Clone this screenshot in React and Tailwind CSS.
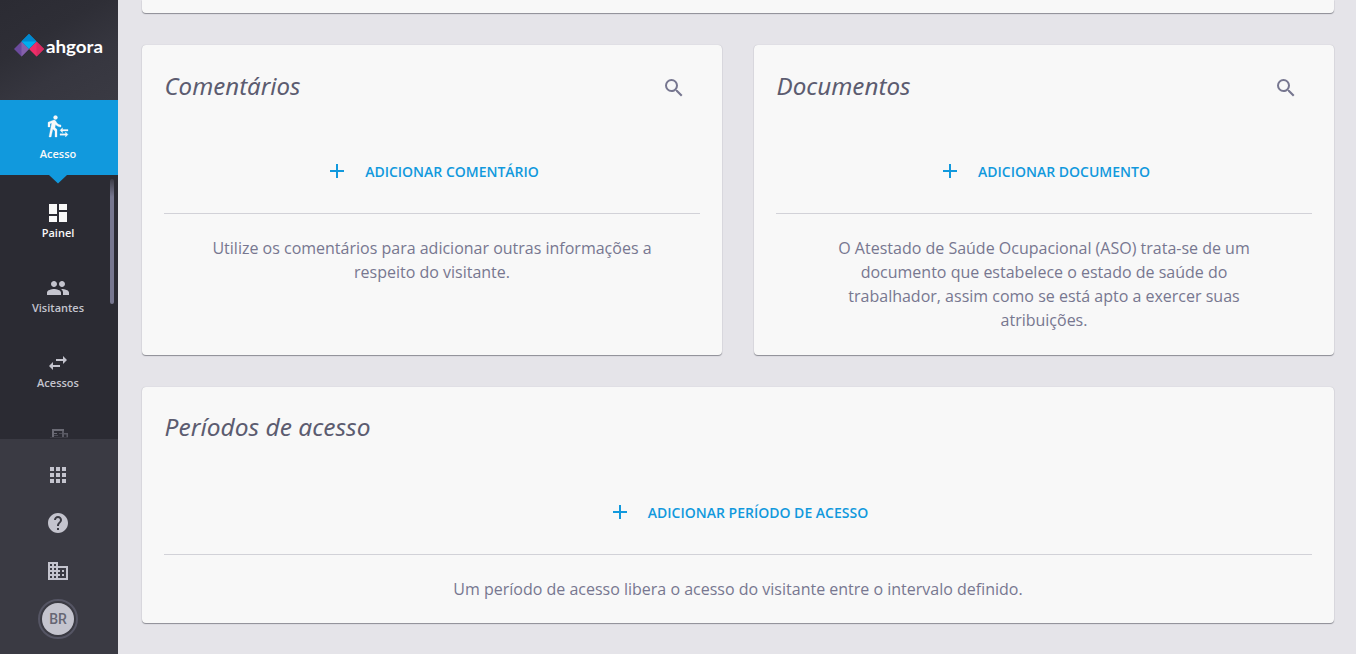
import { MdAdd, MdApps, MdDashboard, MdDomain, MdHelp, MdPeople, MdSearch, MdSwapHoriz } from "react-icons/md";

function Logo() {
  return (
    <div className="flex h-[100px] w-full items-center bg-[linear-gradient(150deg,#2b2b33_0%,#2e2e36_35%,#36363f_65%,#3a3a43_100%)] pl-[14px]">
      <svg width="30" height="24" viewBox="0 0 30 24" className="-mt-[9px] shrink-0">
        <path d="M0 15l7.5-7.5L15 15l-7.5 7.5z" fill="#6b4a9c" />
        <path d="M7.500 7.500L15 15l-7.500 7.500z" fill="#8560ab" />
        <path d="M15 15l7.500-7.500L30 15l-7.500 7.500z" fill="#ee2d68" />
        <path d="M22.500 7.500L30 15l-7.500 7.500z" fill="#d92a62" />
        <path d="M7.500 7.500L15 0l7.500 7.500L15 15z" fill="#00aeef" />
        <path d="M7.500 7.500L15 0l7.500 7.500z" fill="#0088d0" />
      </svg>
      <svg width="57" height="24" className="-mt-[6px] ml-[2px] shrink-0 overflow-visible">
        <text
          x="0"
          y="18"
          textLength="57"
          lengthAdjust="spacingAndGlyphs"
          className="fill-white font-['Lato',sans-serif] text-[17px] font-bold"
        >
          ahgora
        </text>
      </svg>
    </div>
  );
}

function TransferIcon() {
  return (
    <svg width="24" height="24" viewBox="0 0 24 24" fill="currentColor" stroke="currentColor" strokeWidth="0.300">
      <path d="M16.500 15.500H22V17h-5.500v1.750L14 16.250l2.500-2.500v1.750M19.500 19.750V18l2.500 2.500-2.500 2.500v-1.750H14v-1.500h5.500" />
      <circle cx="9.500" cy="3.500" r="2" />
      <path d="M5.750 8.900L3 23h2.100l1.750-8L9 17v6h2v-7.500l-2.050-2 .6-3C10.850 12.040 12.800 13 15 13v-2c-1.850 0-3.450-1-4.350-2.450L9.700 6.950C9.350 6.350 8.700 6 8 6c-.25 0-.5.05-.75.150L2 8.300V13h2V9.650l1.750-.75" />
    </svg>
  );
}

function NavItem({ icon: Icon, label, className }) {
  return (
    <div className={`flex h-[75px] w-[116px] shrink-0 flex-col items-center pt-[26px] ${className}`}>
      <Icon size={24} />
      <span className="text-[11px] leading-4 font-semibold">{label}</span>
    </div>
  );
}

function Sidebar() {
  return (
    <aside className="flex h-full w-[118px] shrink-0 flex-col bg-[#2b2b33]">
      <Logo />
      <div className="relative flex h-[75px] shrink-0 flex-col items-center bg-[#1199dd] pt-[14px] pr-[2px] text-[#f8f8f8]">
        <TransferIcon />
        <span className="mt-2 text-[11px] leading-4 font-semibold">Acesso</span>
        <svg width="18" height="9" viewBox="0 0 18 9" className="absolute top-[75px] left-[49px]">
          <path d="M0 0h18L9 8.500z" fill="#1199dd" />
        </svg>
      </div>
      <div className="flex h-[264px] shrink-0 overflow-hidden">
        <nav className="flex shrink-0 flex-col">
          <NavItem icon={MdDashboard} label="Painel" className="text-[#f8f8f8]" />
          <NavItem icon={MdPeople} label="Visitantes" className="text-[#c4c4ce]" />
          <NavItem icon={MdSwapHoriz} label="Acessos" className="text-[#c4c4ce]" />
          <svg width="18" height="10" viewBox="0 0 18 10" className="mt-[28px] ml-[50px] shrink-0">
            <path d="M2 1h12v2H4v2h3v1H4v3H2z" fill="#6a6a74" />
            <path d="M12 3h2v2h4v4h-1.500V6.500H14V9h-2z" fill="#5a5a64" />
            <path d="M4 7h4v1H4zM9 5h3v1H9z" fill="#4c4c56" />
            <path d="M0 9h18v1H0z" fill="#3a3a43" />
          </svg>
        </nav>
        <div className="mt-1 -ml-[6px] h-[125px] w-1 shrink-0 rounded-full bg-[linear-gradient(180deg,#3c3c46_0px,#777790_18px)]" />
      </div>
      <div className="flex flex-1 flex-col items-center bg-[#3a3a43] pt-6 pr-[2px] text-[#c4c4ce]">
        <MdApps size={24} />
        <MdHelp size={24} className="mt-6" />
        <MdDomain size={24} className="mt-6" />
        <div className="mt-4 flex size-10 items-center justify-center rounded-full border-2 border-[#555564] p-[2px]">
          <div className="flex size-8 items-center justify-center rounded-full bg-[#c4c4ce] font-['Roboto',sans-serif] text-[14px] font-medium text-[#666674]">
            BR
          </div>
        </div>
      </div>
    </aside>
  );
}

function Card({ title, titleWidth, search, action, children, className, headerClass, textClass }) {
  return (
    <section
      className={`flex flex-col rounded-[4px] bg-[#f8f8f8] px-[22px] shadow-[0_1px_1px_#8c8c94,0_0_1px_#b4b4bc] ${className}`}
    >
      <header className={`flex shrink-0 items-center justify-between pr-[14.5px] ${headerClass}`}>
        <h2>
          <svg width={titleWidth} height="36" className="block overflow-visible">
            <text
              x="0.500"
              y="26"
              textLength={titleWidth + 1}
              lengthAdjust="spacingAndGlyphs"
              className="fill-[#5c5c70] font-['Noto_Sans',sans-serif] text-[24px] italic"
            >
              {title}
            </text>
          </svg>
        </h2>
        {search && <MdSearch size={24} className="mt-[2px] text-[#777790]" />}
      </header>
      <div className="flex h-[85px] shrink-0 items-center justify-center gap-4 border-b border-[#d2d2d8] text-[#1199dd]">
        <MdAdd size={24} />
        <span className="pt-[2px] text-[14px] leading-6 font-semibold">{action}</span>
      </div>
      <p className={`mt-[22px] self-center text-center text-[16px] leading-6 text-[#777790] ${textClass}`}>
        {children}
      </p>
    </section>
  );
}

export default function App() {
  return (
    <div className="flex h-[654px] w-[1356px] overflow-hidden bg-[#e5e4e9] font-['Open_Sans',sans-serif]">
      <Sidebar />
      <main className="flex flex-1 flex-col pr-[22px] pl-6">
        <div className="h-[13px] shrink-0 rounded-b-[4px] bg-[#f8f8f8] shadow-[0_1px_1px_#8c8c94,0_0_1px_#b4b4bc]" />
        <div className="mt-8 grid grid-cols-2 gap-8">
          <Card
            title="Comentários"
            titleWidth={135}
            search
            action="ADICIONAR COMENTÁRIO"
            className="h-[310px]"
            headerClass="h-[84px]"
            textClass="w-[456px]"
          >
            Utilize os comentários para adicionar outras informações a respeito do visitante.
          </Card>
          <Card
            title="Documentos"
            titleWidth={133}
            search
            action="ADICIONAR DOCUMENTO"
            className="h-[310px]"
            headerClass="h-[84px]"
            textClass="w-[428px]"
          >
            O Atestado de Saúde Ocupacional (ASO) trata-se de um documento que estabelece o estado de saúde do
            trabalhador, assim como se está apto a exercer suas atribuições.
          </Card>
        </div>
        <Card
          title="Períodos de acesso"
          titleWidth={205}
          action="ADICIONAR PERÍODO DE ACESSO"
          className="mt-8 h-[236px]"
          headerClass="h-[83px] pb-px"
          textClass="w-full"
        >
          Um período de acesso libera o acesso do visitante entre o intervalo definido.
        </Card>
      </main>
    </div>
  );
}
